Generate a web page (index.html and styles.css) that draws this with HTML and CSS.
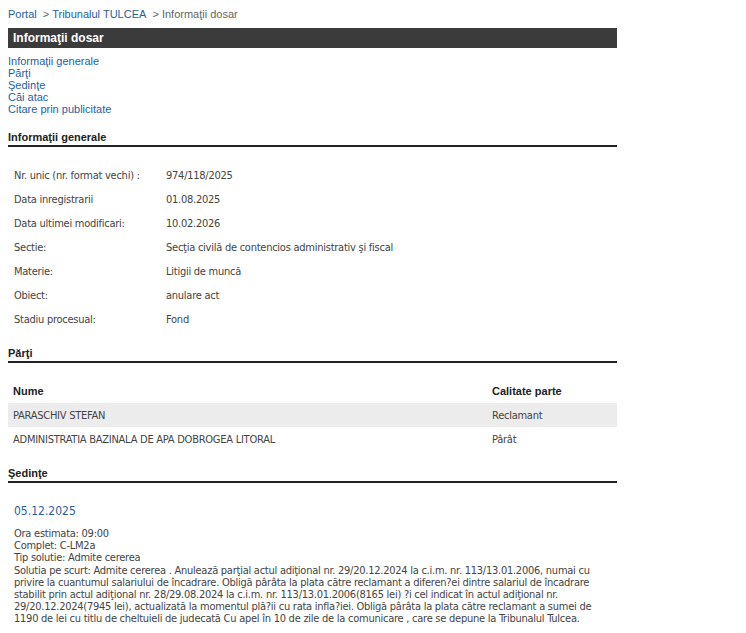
FILE: index.html
```html
<!DOCTYPE html>
<html lang="ro">
<head>
<meta charset="UTF-8">
<title>Informaţii dosar</title>
<link rel="stylesheet" href="styles.css">
</head>
<body>
<div class="page">
    <div class="breadcrumb">
        <a href="#">Portal</a>&nbsp; &gt; <a href="#">Tribunalul TULCEA</a>&nbsp; &gt; Informaţii dosar
    </div>
    <div class="title-bar">Informaţii dosar</div>
    <div class="toc">
        <a href="#">Informaţii generale</a>
        <a href="#">Părţi</a>
        <a href="#">Şedinţe</a>
        <a href="#">Căi atac</a>
        <a href="#">Citare prin publicitate</a>
    </div>

    <div class="section-title">Informaţii generale</div>
    <table class="info">
        <tr><td class="label">Nr. unic (nr. format vechi) :</td><td>974/118/2025</td></tr>
        <tr><td class="label">Data inregistrarii</td><td>01.08.2025</td></tr>
        <tr><td class="label">Data ultimei modificari:</td><td>10.02.2026</td></tr>
        <tr><td class="label">Sectie:</td><td>Secţia civilă de contencios administrativ şi fiscal</td></tr>
        <tr><td class="label">Materie:</td><td>Litigii de muncă</td></tr>
        <tr><td class="label">Obiect:</td><td>anulare act</td></tr>
        <tr><td class="label">Stadiu procesual:</td><td>Fond</td></tr>
    </table>

    <div class="section-title">Părţi</div>
    <table class="parties">
        <tr class="head"><th>Nume</th><th class="role">Calitate parte</th></tr>
        <tr class="odd"><td>PARASCHIV STEFAN</td><td class="role">Reclamant</td></tr>
        <tr><td>ADMINISTRATIA BAZINALA DE APA DOBROGEA LITORAL</td><td class="role">Pârât</td></tr>
    </table>

    <div class="section-title">Şedinţe</div>
    <div class="hearing">
        <div class="hearing-date">05.12.2025</div>
        <div class="hearing-body">
            Ora estimata: 09:00<br>
            Complet: C-LM2a<br>
            Tip solutie: Admite cererea<br>
            Solutia pe scurt: Admite cererea . Anulează parţial actul adiţional nr. 29/20.12.2024 la c.i.m. nr. 113/13.01.2006, numai cu privire la cuantumul salariului de încadrare. Obligă pârâta la plata către reclamant a diferen?ei dintre salariul de încadrare stabilit prin actul adiţional nr. 28/29.08.2024 la c.i.m. nr. 113/13.01.2006(8165 lei) ?i cel indicat în actul adiţional nr. 29/20.12.2024(7945 lei), actualizată la momentul plă?ii cu rata infla?iei. Obligă pârâta la plata către reclamant a sumei de 1190 de lei cu titlu de cheltuieli de judecată Cu apel în 10 de zile de la comunicare , care se depune la Tribunalul Tulcea.
        </div>
    </div>
</div>
</body>
</html>
```

FILE: styles.css
```css
body {
    margin: 0;
    padding: 8px 8px 0 8px;
    font-family: 'Liberation Sans', Arial, sans-serif;
    font-size: 11px;
    color: #444;
    background: #fff;
}
a {
    color: #1f5fa0;
    text-decoration: none;
}
.page {
    width: 609px;
}
.breadcrumb {
    color: #666;
    line-height: 12px;
    height: 20px;
}
.title-bar {
    background-color: #3c3b3b;
    color: #fff;
    font-weight: bold;
    font-size: 12px;
    padding: 3px 5px;
    line-height: 14px;
}
.toc {
    display: flex;
    flex-direction: column;
    padding-top: 7px;
    line-height: 12px;
}
.section-title {
    font-weight: bold;
    color: #222;
    margin-top: 16px;
    padding-bottom: 2px;
    line-height: 12px;
    border-bottom: 2px solid #222;
}
table {
    border-collapse: collapse;
    width: 100%;
    font-family: 'DejaVu Sans Condensed', Tahoma, sans-serif;
    font-size: 11px;
    letter-spacing: -0.25px;
    color: #444;
}
.info {
    margin-top: 16px;
    margin-bottom: 12px;
}
.info td {
    height: 24px;
    padding: 0 6px;
}
.info td.label {
    width: 140px;
}
.parties {
    margin-top: 15px;
    margin-bottom: 8px;
}
.parties th {
    text-align: left;
    font-family: 'Liberation Sans', Arial, sans-serif;
    letter-spacing: 0;
    color: #222;
    height: 25px;
    padding: 0 5px;
}
.parties td {
    height: 24px;
    padding: 0 5px;
}
.parties tr.odd {
    background-color: #ececec;
}
.parties .role {
    width: 120px;
}
.hearing {
    padding: 20px 6px 0 6px;
    font-family: 'DejaVu Sans Condensed', Tahoma, sans-serif;
    letter-spacing: -0.25px;
}
.hearing-date {
    color: #1f5fa0;
    font-size: 12px;
    letter-spacing: 0;
    line-height: 16px;
    margin-bottom: 9px;
}
.hearing-body {
    line-height: 12.2px;
}
```
